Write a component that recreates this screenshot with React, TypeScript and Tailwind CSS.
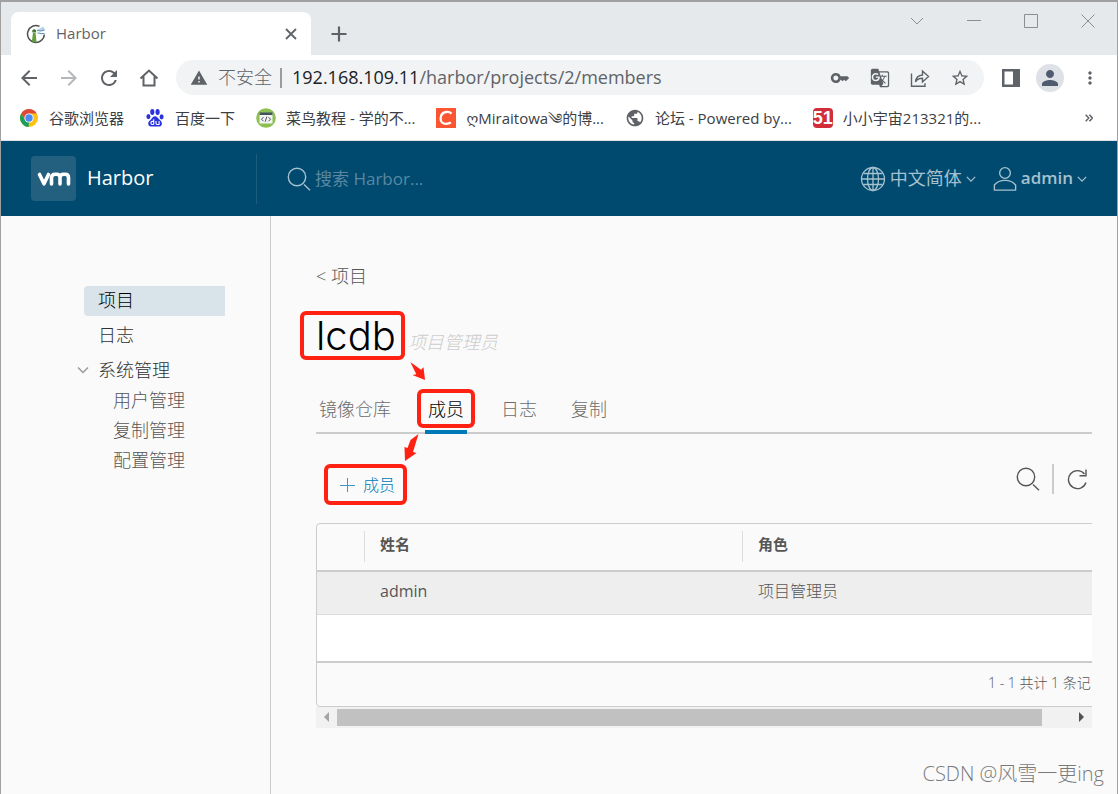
import type { ReactNode } from "react";
import {
  MdKey,
  MdGTranslate,
  MdStarOutline,
  MdPerson,
  MdMoreVert,
  MdRefresh,
  MdWarning,
  MdArrowBack,
  MdArrowForward,
  MdPublic,
} from "react-icons/md";

function ChromeLogo() {
  return (
    <svg viewBox="0 0 20 20" className="size-5 shrink-0" aria-hidden="true">
      <circle cx="10" cy="10" r="9" fill="#fbc116" />
      <path d="M10 5.5H17.8A9 9 0 0 0 2.2 5.5L6 12Z" fill="#dd4a3a" />
      <path d="M2.2 5.5L6.1 12.3L10 14.5L9.6 19A9 9 0 0 1 2.2 5.5Z" fill="#1c9f5c" />
      <circle cx="10" cy="10" r="4.6" fill="#fff" />
      <circle cx="10" cy="10" r="3.7" fill="#4a8af4" />
    </svg>
  );
}

function PawLogo() {
  return (
    <svg viewBox="0 0 20 20" className="size-5 shrink-0" fill="#2a32df" aria-hidden="true">
      <ellipse cx="7.3" cy="4" rx="2.1" ry="2.9" />
      <ellipse cx="12.6" cy="4" rx="2.1" ry="2.9" />
      <ellipse cx="3.4" cy="8.6" rx="2" ry="2.6" />
      <ellipse cx="16.6" cy="8.8" rx="2" ry="2.6" />
      <path d="M10 8.2c-2 0-2.6 1.6-3.6 2.7-1.2 1.3-3.4 2.2-3.2 4.8.2 2.4 1.9 2.9 3.5 2.9h6.8c1.7 0 3.3-.6 3.4-2.9.1-2.5-2.1-3.5-3.3-4.9-1-1.1-1.6-2.6-3.6-2.6z" />
      <path d="M8.7 11.3v5.2M8.7 13.4H7.3q-1.4 0-1.4 1.5t1.4 1.6h1.4M11 13.1v2.2q0 1.2 1.1 1.2h2v-3.4" fill="none" stroke="#fff" strokeWidth="1.1" />
    </svg>
  );
}

function CodeLogo() {
  return (
    <svg viewBox="0 0 20 20" className="size-5 shrink-0" aria-hidden="true">
      <circle cx="10" cy="10" r="9.8" fill="#8cc152" />
      <rect x="3.5" y="5" width="13" height="10.5" fill="#f2f2f2" />
      <rect x="3.5" y="4.5" width="13" height="2.5" fill="#41535d" />
      <path d="M7.5 9.2l-2 2 2 2M12.5 9.2l2 2-2 2M10.7 8.7l-1.4 5" fill="none" stroke="#46525a" strokeWidth="1" />
    </svg>
  );
}

function CsdnLogo() {
  return (
    <svg viewBox="0 0 20 20" className="size-5 shrink-0" aria-hidden="true">
      <rect width="20" height="20" fill="#fc5531" />
      <path d="M15.5 5.6C14.2 4.3 12.3 3.7 10.2 4 6.9 4.4 4.7 7 4.6 10.6c-.1 3.3 2 5.3 5.4 5.3 1.8 0 3.6-.5 4.9-1.3" fill="none" stroke="#fff" strokeWidth="2.3" />
    </svg>
  );
}

function FiftyOneLogo() {
  return (
    <span className="flex size-5 shrink-0 items-center justify-center rounded-sm bg-[#d22e3a] font-['Liberation_Sans_Narrow','Liberation_Sans',sans-serif] text-lg font-bold leading-none text-white">
      51
    </span>
  );
}

function HarborFavicon() {
  return (
    <svg viewBox="0 0 20 20" className="size-5 shrink-0" aria-hidden="true">
      <path d="M13.5 2.4A8.4 8.4 0 1 0 18.3 10.5" fill="none" stroke="#4d5154" strokeWidth="1.5" />
      <path d="M5.8 17.5 7 9h2.6l1 9.5z" fill="#62a03f" />
      <path d="M6.3 8.5V6.3L8.2 5l1.9 1.3v2.2z" fill="#477a35" />
      <path d="M10.5 6 17.5 2.5l1.5 3.5-3 1z" fill="#b9d2e8" />
      <path d="M11 6.8c2-1 2.5 1 4.5 0s2-.5 3-.5M11.5 9.2c2-1 2.5 1.3 4.5.3h2.5" fill="none" stroke="#5f8fbe" strokeWidth="1.1" />
    </svg>
  );
}

const bookmarks: { label: string; icon: ReactNode }[] = [
  { label: "谷歌浏览器", icon: <ChromeLogo /> },
  { label: "百度一下", icon: <PawLogo /> },
  { label: "菜鸟教程 - 学的不...", icon: <CodeLogo /> },
  { label: "ღMiraitowa༄的博...", icon: <CsdnLogo /> },
  { label: "论坛 - Powered by...", icon: <MdPublic className="size-5 shrink-0 text-[#5f6368]" /> },
  { label: "小小宇宙213321的...", icon: <FiftyOneLogo /> },
];

function SearchIcon({ className }: { className: string }) {
  return (
    <svg viewBox="0 0 24 24" className={className} fill="none" stroke="currentColor" strokeWidth="1.4" aria-hidden="true">
      <circle cx="10" cy="10" r="8.7" />
      <path d="m17 17.5 6 5.7" />
    </svg>
  );
}

function Chevron({ className }: { className: string }) {
  return (
    <svg viewBox="0 0 12 12" className={className} fill="none" stroke="currentColor" strokeWidth="1.5" aria-hidden="true">
      <path d="M1 3.5 6 8.5l5-5" />
    </svg>
  );
}

function TabStrip() {
  return (
    <div className="flex h-[53px] items-end bg-[#e5e9ec] pl-2.5">
      <div className="flex h-[43px] w-[300px] items-center rounded-t-lg bg-white pl-[15px] pr-3">
        <HarborFavicon />
        <span className="ml-2.5 flex-1 text-[15px] text-[#5f6368]">Harbor</span>
        <button aria-label="关闭标签页" className="flex size-4 items-center justify-center">
          <svg viewBox="0 0 12 12" className="size-3" stroke="#5f6368" strokeWidth="1.8">
            <path d="m1 1 10 10M11 1 1 11" />
          </svg>
        </button>
      </div>
      <button aria-label="新标签页" className="ml-5 flex h-[43px] items-center">
        <svg viewBox="0 0 16 16" className="size-4" stroke="#5f6368" strokeWidth="2.2">
          <path d="M8 .5v15M.5 8h15" />
        </svg>
      </button>
      <div className="ml-auto flex items-center gap-[43px] self-start pr-[22px] pt-3 text-[#8a8e91]">
        <button aria-label="搜索标签页">
          <svg viewBox="0 0 14 14" className="size-3.5" fill="none" stroke="currentColor">
            <path d="m1 4 6 6 6-6" />
          </svg>
        </button>
        <button aria-label="最小化">
          <svg viewBox="0 0 14 14" className="size-3.5" fill="none" stroke="currentColor">
            <path d="M0 6.5h14" />
          </svg>
        </button>
        <button aria-label="最大化">
          <svg viewBox="0 0 14 14" className="size-3.5" fill="none" stroke="currentColor">
            <path d="M.5.5h13v13H.5z" />
          </svg>
        </button>
        <button aria-label="关闭">
          <svg viewBox="0 0 14 14" className="size-3.5" fill="none" stroke="currentColor">
            <path d="m.5.5 13 13M13.5.5l-13 13" />
          </svg>
        </button>
      </div>
    </div>
  );
}

function Toolbar() {
  return (
    <div className="flex h-[45px] items-center bg-white pl-4 pr-[17px] text-[#5f6368]">
      <div className="flex items-center gap-4">
        <button aria-label="后退"><MdArrowBack className="size-6" /></button>
        <button aria-label="前进"><MdArrowForward className="size-6 text-[#b5b8bb]" /></button>
        <button aria-label="刷新"><MdRefresh className="size-6" /></button>
        <button aria-label="主页">
          <svg viewBox="0 0 24 24" className="size-6" fill="none" stroke="currentColor" strokeWidth="2">
            <path d="M3.5 12.5 12 4.5l8.500 8M6.5 10.5V19.5h11v-9" />
          </svg>
        </button>
      </div>
      <div className="ml-[15px] flex h-[35px] flex-1 items-center rounded-full bg-[#f1f3f4] px-3.5">
        <MdWarning className="size-[18px] shrink-0" />
        <span className="ml-2.5 whitespace-nowrap pb-0.5 text-lg font-light">不安全</span>
        <span className="mx-2 h-5 w-0.5 shrink-0 bg-[#9a9da0]" />
        <div className="min-w-0 flex-1 truncate pb-0.5 pl-0.5 text-lg">
          <span className="text-[#202124]">192.168.109.11</span>
          <span>/harbor/projects/2/members</span>
        </div>
        <div className="flex items-center gap-5">
          <button aria-label="密码"><MdKey className="size-5" /></button>
          <button aria-label="翻译此页"><MdGTranslate className="size-5" /></button>
          <button aria-label="分享">
            <svg viewBox="0 0 20 20" className="size-5" fill="none" stroke="currentColor" strokeWidth="1.4">
              <path d="M1.5 5.5v12.8h13.5v-3M5.5 13.8c.5-4 2.8-6.5 7-6.8V3l6 5.5-6 5.5v-3.800c-3.2 0-5.3.8-7 3.6z" />
            </svg>
          </button>
          <button aria-label="为此标签页添加书签"><MdStarOutline className="size-5" /></button>
        </div>
      </div>
      <div className="ml-[18px] flex items-center gap-4">
        <button aria-label="显示侧边栏">
          <svg viewBox="0 0 18 18" className="size-[18px]" fill="currentColor">
            <path d="M0 0h18v18H0zM2.5 2.5v13h8.5v-13z" fillRule="evenodd" />
          </svg>
        </button>
        <button aria-label="个人资料" className="flex size-7 items-center justify-center rounded-full bg-[#dee1e6]">
          <MdPerson className="size-6 text-[#4f5b6e]" />
        </button>
        <button aria-label="菜单"><MdMoreVert className="size-5" /></button>
      </div>
    </div>
  );
}

function BookmarksBar() {
  return (
    <nav aria-label="书签" className="flex h-[41px] items-center gap-[21px] border-b border-[#dfe3e4] bg-white pb-1 pl-[18px] pr-6 text-[15px] text-[#3c4043]">
      {bookmarks.map((b) => (
        <a key={b.label} href="#" className="flex items-center gap-2.5 whitespace-nowrap">
          {b.icon}
          {b.label}
        </a>
      ))}
      <button aria-label="更多书签" className="ml-auto">
        <svg viewBox="0 0 8 8" className="size-2" fill="none" stroke="#5f6368" strokeWidth="1.5">
          <path d="m.7.7 3 3.3-3 3.3M4.4.7l3 3.3-3 3.3" />
        </svg>
      </button>
    </nav>
  );
}

function Header() {
  return (
    <header className="flex h-[75px] items-center bg-[#004a70] text-[#a6c1ce]">
      <a href="#" className="flex w-[255px] items-center gap-[11px] pl-[30px] text-xl text-white">
        <span className="flex size-[45px] items-center justify-center rounded bg-[#23607f]">
          <svg viewBox="0 0 34 16" className="h-4 w-[34px]" fill="none" stroke="#fff" strokeWidth="3.6" strokeLinecap="round" strokeLinejoin="round">
            <path d="M2.5 3.5 7 12.8 11.5 3.5M14.5 13V6.8q0-3.5 3.6-3.5h1.6q3.3 0 3.3 3.5V13M23 6.8q0-3.5 3.6-3.5h1.6q3.3 0 3.3 3.5V13" />
          </svg>
        </span>
        <span className="pb-0.5">Harbor</span>
      </a>
      <label className="flex h-[50px] flex-1 items-center border-l border-[#1d5c7d] pl-[30px]">
        <SearchIcon className="size-6 shrink-0" />
        <input
          type="search"
          aria-label="搜索 Harbor"
          placeholder="搜索 Harbor..."
          className="ml-1 w-56 bg-transparent text-[17px] outline-none placeholder:text-[#5988a0]"
        />
      </label>
      <div className="flex items-center gap-[17px] pr-[30px]">
        <button className="flex items-center gap-1">
          <svg viewBox="0 0 26 26" className="size-[26px]" fill="none" stroke="currentColor" strokeWidth="1.3" aria-hidden="true">
            <circle cx="13" cy="13" r="11.5" />
            <ellipse cx="13" cy="13" rx="5.5" ry="11.5" />
            <path d="M13 1.5v23M1.5 13h23M3.5 7.5h19M3.5 18.5h19" />
          </svg>
          <span className="pb-0.5 text-lg">中文简体</span>
          <Chevron className="size-2.5" />
        </button>
        <button className="flex items-center gap-1">
          <svg viewBox="0 0 26 28" className="h-7 w-6" fill="none" stroke="currentColor" strokeWidth="1.5" aria-hidden="true">
            <circle cx="13" cy="7.5" r="5.8" />
            <path d="M1.5 26v-5.5c2.5-3 6.5-5 11.5-5s9 2 11.5 5V26z" strokeLinejoin="round" />
          </svg>
          <span className="pb-0.5 text-[17px] font-semibold">admin</span>
          <Chevron className="size-2.5" />
        </button>
      </div>
    </header>
  );
}

function Sidebar() {
  return (
    <nav aria-label="主导航" className="w-[270px] shrink-0 border-r border-[#ccc] pl-[76px] pr-[45px] pt-[70px] text-lg font-light leading-7 text-[#313131]">
      <ul className="flex flex-col gap-[5px]">
        <li className="pl-[7px]">
          <a href="#" aria-current="page" className="block rounded-l-sm bg-[#d9e4ea] pb-0.5 pl-3.5 text-black">项目</a>
        </li>
        <li className="pl-[7px]">
          <a href="#" className="block pb-0.5 pl-3.5">日志</a>
        </li>
        <li>
          <button className="flex items-center gap-[9px] pb-0.5">
            <Chevron className="size-3 text-[#9a9a9a]" />
            系统管理
          </button>
          <ul className="pl-9 text-[#565656]">
            <li><a href="#" className="block pb-0.5">用户管理</a></li>
            <li><a href="#" className="block pb-0.5">复制管理</a></li>
            <li><a href="#" className="block pb-0.5">配置管理</a></li>
          </ul>
        </li>
      </ul>
    </nav>
  );
}

function Callout({ className }: { className: string }) {
  return <span aria-hidden="true" className={"pointer-events-none absolute rounded-md border-4 border-[#ff2112] " + className} />;
}

function ProjectTabs() {
  return (
    <div role="tablist" className="mt-[19px] flex h-12 items-stretch gap-[34px] border-b-2 border-[#ccc] px-[3px] text-lg font-light text-[#6c6c6c]">
      <button role="tab" aria-selected="false">镜像仓库</button>
      <button role="tab" aria-selected="true" className="relative -mb-0.5 border-b-4 border-[#0079b8] px-[3px] pt-0.5 text-black">
        成员
        <Callout className="-inset-x-2 top-[3px] bottom-0.5" />
        <svg viewBox="0 0 18 20" className="absolute -left-4 -top-[25px] h-5 w-[18px] max-w-none" fill="#ff2112" aria-hidden="true">
          <path d="M1.3 1 12 8.8l2.5-2.5 1.5 12.7-12.5-5 3.8-.7z" />
        </svg>
        <svg viewBox="0 0 18 28" className="absolute -left-[22px] top-12 h-7 w-[18px] max-w-none" fill="#ff2112" aria-hidden="true">
          <path d="M15.500 0 7.500 6 4.500 14 1.500 13 2 27l11.500-8-3.5-1z" />
        </svg>
      </button>
      <button role="tab" aria-selected="false">日志</button>
      <button role="tab" aria-selected="false">复制</button>
    </div>
  );
}

function ActionBar() {
  return (
    <div className="flex h-[89px] items-start justify-between pr-1 pt-[30px]">
      <button className="relative ml-2 flex h-[41px] items-center gap-2 pl-[15px] pr-3 text-[#0079b8]">
        <svg viewBox="0 0 16 16" className="size-4" stroke="#3d98c8" aria-hidden="true">
          <path d="M8.5 1v14M1 8.5h15" />
        </svg>
        <span className="text-base font-light">成员</span>
        <Callout className="inset-0" />
      </button>
      <div className="flex h-[30px] items-center text-[#565656]">
        <button aria-label="搜索"><SearchIcon className="size-6" /></button>
        <span className="ml-3 h-[30px] w-0.5 bg-[#ccc]" />
        <button aria-label="刷新" className="ml-3">
          <svg viewBox="0 0 22 22" className="size-[22px]" fill="none" stroke="currentColor" strokeWidth="1.4">
            <path d="M20 14.5A9 9 0 1 1 18.5 6M20 1.5v6.3h-6.5" />
          </svg>
        </button>
      </div>
    </div>
  );
}

function MembersGrid() {
  return (
    <div className="overflow-hidden">
      <div className="w-[860px] min-w-[110%] rounded border border-[#ccc] text-[#565656]">
        <table className="w-full table-fixed border-collapse text-left">
          <colgroup>
            <col className="w-[47px]" />
            <col className="w-[378px]" />
            <col />
          </colgroup>
          <thead>
            <tr className="h-[47px] border-b-2 border-[#ccc] text-[15px]">
              <td />
              <th className="p-0 pb-px font-bold"><div className="flex h-[31px] items-center border-l border-[#ddd] pb-1 pl-[15px]">姓名</div></th>
              <th className="p-0 pb-px font-bold"><div className="flex h-[31px] items-center border-l border-[#ddd] pb-1 pl-[15px]">角色</div></th>
            </tr>
          </thead>
          <tbody>
            <tr className="h-[43px] border-b border-[#ddd] bg-[#eee] text-base">
              <td />
              <td className="pb-1 pl-4">admin</td>
              <td className="pb-1 pl-4 font-light">项目管理员</td>
            </tr>
          </tbody>
        </table>
        <div className="h-[46px] bg-white" />
        <div className="flex h-[45px] items-center border-t-2 border-[#ccc] pb-0.5 pl-[671px] text-sm font-light">
          <span className="whitespace-nowrap">1 - 1 共计 1 条记</span>
        </div>
      </div>
    </div>
  );
}

function ScrollTrack() {
  return (
    <div className="flex h-[21px] items-center gap-2 bg-[#f1f1f1] px-2">
      <svg viewBox="0 0 5 10" className="h-2.5 w-[5px]" fill="#a3a3a3" aria-hidden="true"><path d="M5 0v10L0 5z" /></svg>
      <div className="flex-1">
        <div className="h-[17px] w-[96%] bg-[#c1c1c1]" />
      </div>
      <svg viewBox="0 0 5 10" className="h-2.5 w-[5px]" fill="#505050" aria-hidden="true"><path d="M0 0v10l5-5z" /></svg>
    </div>
  );
}

function Members() {
  return (
    <main className="min-w-0 flex-1 pl-[45px] pr-[25px] pt-[45px]">
      <a href="#" className="block text-lg font-light leading-[30px] text-[#565656]">&lt; 项目</a>
      <div className="mt-3 flex h-16 items-center gap-3">
        <h1 className="relative font-['Inter'] text-[40px] font-light leading-[47px] text-black">
          lcdb
          <Callout className="-inset-y-px -left-4 -right-[9px]" />
        </h1>
        <span className="pt-3.5 text-lg font-light italic text-[#ccc]">项目管理员</span>
      </div>
      <ProjectTabs />
      <ActionBar />
      <MembersGrid />
      <ScrollTrack />
      <p className="-mr-3 mt-8 text-right text-xl font-light text-[#7a7a7a]">CSDN @风雪一更ing</p>
    </main>
  );
}

export default function App() {
  return (
    <div className="flex min-h-screen flex-col border-x border-t-2 border-[#a0a0a0] bg-[#fafafa] font-['Open_Sans','Noto_Sans_CJK_SC','DejaVu_Sans',sans-serif]">
      <TabStrip />
      <Toolbar />
      <BookmarksBar />
      <Header />
      <div className="flex flex-1">
        <Sidebar />
        <Members />
      </div>
    </div>
  );
}
